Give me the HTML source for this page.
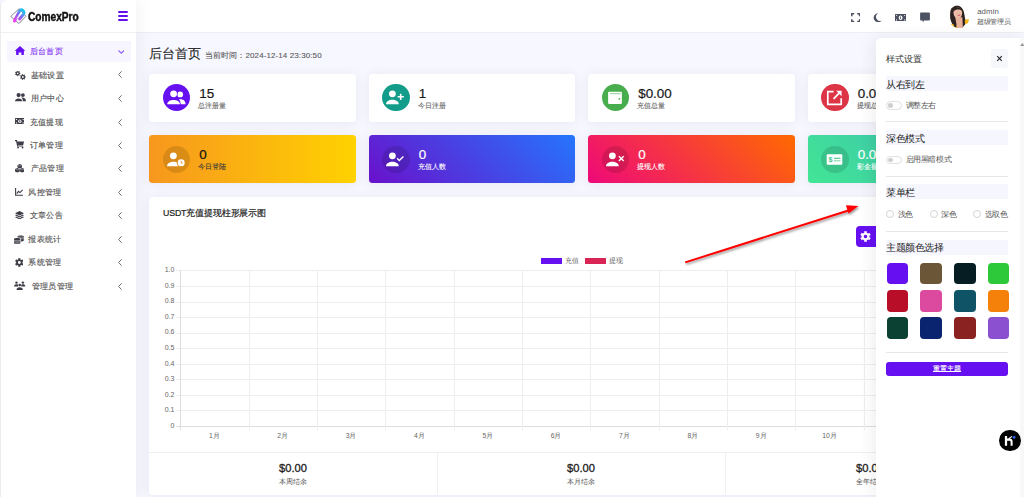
<!DOCTYPE html>
<html><head><meta charset="utf-8">
<style>
*{box-sizing:border-box;margin:0;padding:0}
html,body{width:1024px;height:497px;overflow:hidden}
body{position:relative;background:#f7f7ff;font-family:"Liberation Sans",sans-serif;color:#333}
.abs{position:absolute}
#side{position:absolute;left:0;top:0;width:136px;height:497px;background:#fff;border-left:1px solid #ececec;border-top-left-radius:6px;box-shadow:4px 0 14px rgba(30,30,60,.05);z-index:3}
#side .logo{position:absolute;left:0;top:0;width:135px;height:33px;border-bottom:1px solid #f0f0f2}
#head{position:absolute;left:136px;top:0;width:888px;height:33px;background:#fff;border-bottom:1px solid #efeff3;z-index:2}
.mt{font-size:8.25px;letter-spacing:.35px;-webkit-text-stroke:.15px currentColor;white-space:nowrap;line-height:12px}
.card{position:absolute;width:206.6px;height:48px;background:#fff;border-radius:3.5px;box-shadow:0 1px 12px rgba(40,40,100,.075)}
.card .circ{position:absolute;left:13.8px;top:10.8px;width:27.2px;height:27.2px;border-radius:50%}
.card .num{position:absolute;left:50px;top:12px;font-size:13.4px;color:#1a1a1a;-webkit-text-stroke:.2px currentColor}
.card .lbl{position:absolute;left:49.3px;top:27.2px;font-size:7px;color:#666;-webkit-text-stroke:.1px currentColor}
.card.g .num,.card.g .lbl{color:#fff}
.card.g .circ{background:rgba(0,0,0,.12)}
.card.dk .num{color:#111}.card.dk .lbl{color:#3a3a3a}
.ylab{font-size:7px;color:#666;text-align:right;white-space:nowrap}
.xlab{font-size:6.8px;color:#666;text-align:center}
#panel{position:absolute;left:876px;top:38px;width:148px;height:459px;background:#fff;border-top-left-radius:5px;box-shadow:-3px 0 16px rgba(0,0,0,.07);z-index:5}
.sec{position:absolute;left:10px;width:122px;height:15px;background:#f6f6ff;font-size:9.6px;letter-spacing:-.5px;color:#222}
.sec span{position:absolute;left:0;top:2.5px}
.sep{position:absolute;left:10px;width:122px;height:1px;background:#e6e6ea}
.tog{position:absolute;left:10px;width:15.5px;height:8.5px;border:1px solid #e0e0e0;border-radius:5px;background:#fff}
.tog:after{content:"";position:absolute;left:1.2px;top:1.2px;width:4.6px;height:4.6px;border-radius:50%;background:#cfcfcf}
.plbl{position:absolute;font-size:7.5px;letter-spacing:-.35px;color:#555;white-space:nowrap}
.radio{position:absolute;width:8px;height:8px;border:1px solid #d4d4d4;border-radius:50%;background:#fff}
.sw{position:absolute;width:21.5px;height:21.5px;border-radius:4px}
</style></head><body>

<div id="side">
  <div class="logo">
    <svg class="abs" style="left:7px;top:4px" width="20" height="22" viewBox="0 0 20 22">
      <defs><linearGradient id="lg1" x1="0" y1="1" x2=".75" y2="0"><stop offset="0" stop-color="#f43cf0"/><stop offset=".5" stop-color="#8e5cf0"/><stop offset="1" stop-color="#1ec4ee"/></linearGradient></defs>
      <path d="M3.2 12 L10.8 5 Q11.2 4.6 11.6 5 L17.6 11.8 Q18 12.2 17.6 12.6 L11.4 19.2 Q11 19.6 10.6 19.2 L3.2 12.8 Q2.8 12.4 3.2 12Z" fill="none" stroke="#747488" stroke-width=".9"/>
      <path d="M6.4 17 L11.6 7 Q13 4.6 14.8 6.4 L15.6 7.4 Q16.6 8.8 15.4 10.4 L11.6 15" fill="none" stroke="url(#lg1)" stroke-width="3" stroke-linecap="round"/><path d="M8.6 14.6 L12.9 8.4" stroke="#fff" stroke-width=".7"/>
    </svg>
    <div class="abs" style="left:26.6px;top:9.6px;font-size:12px;font-weight:bold;color:#111;-webkit-text-stroke:.45px #111;transform:scaleX(.845);transform-origin:left;white-space:nowrap">ComexPro</div>
    <div class="abs" style="left:116.5px;top:11.4px;width:10.6px;height:1.8px;border-radius:1px;background:#6610f2"></div>
    <div class="abs" style="left:116.5px;top:15.2px;width:10.6px;height:1.8px;border-radius:1px;background:#6610f2"></div>
    <div class="abs" style="left:116.5px;top:18.9px;width:10.6px;height:1.8px;border-radius:1px;background:#6610f2"></div>
  </div>
  <div class="abs" style="left:5.6px;top:40.8px;width:124.8px;height:20.8px;background:#f7f5ff"></div>
<svg class="abs" style="left:13.5px;top:46px" width="10" height="9" viewBox="0 0 10 9"><path d="M5 0 L0.1 4.6 L0.5 4.9 H1.1 V8.5 Q1.1 8.9 1.6 8.9 H3.6 V6.6 H6.4 V8.9 H8.4 Q8.9 8.9 8.9 8.5 V4.9 H9.5 L9.9 4.6Z" fill="#6610f2"/></svg>
<div class="abs mt" style="left:28.8px;top:45.8px;color:#8b3df5">后台首页</div>
<svg class="abs" style="left:116.6px;top:49.8px" width="6.6" height="4" viewBox="0 0 6.6 4"><path d="M0.5 0.5 L3.3 3.2 L6.1 0.5" fill="none" stroke="#9466f4" stroke-width="1.15"/></svg>
<svg class="abs" style="left:13.5px;top:70.5px" width="11" height="9" viewBox="0 0 11 9"><path fill-rule="evenodd" d="M4.68 1.85 L5.42 2.01 L5.42 2.79 L4.68 2.95 L4.36 3.60 L4.70 4.28 L4.09 4.77 L3.51 4.29 L2.79 4.45 L2.48 5.14 L1.71 4.97 L1.73 4.21 L1.16 3.75 L0.42 3.94 L0.08 3.23 L0.68 2.77 L0.68 2.03 L0.08 1.57 L0.42 0.86 L1.16 1.05 L1.73 0.59 L1.71 -0.17 L2.48 -0.34 L2.79 0.35 L3.51 0.51 L4.09 0.03 L4.70 0.52 L4.36 1.20Z M3.50 2.40 A0.8 0.8 0 1 0 1.90 2.40 A0.8 0.8 0 1 0 3.50 2.40Z" fill="#3d3d48"/><path fill-rule="evenodd" d="M10.02 5.41 L10.82 5.58 L10.82 6.42 L10.02 6.59 L9.68 7.29 L10.05 8.02 L9.39 8.55 L8.76 8.02 L8.00 8.20 L7.66 8.94 L6.84 8.75 L6.86 7.94 L6.24 7.45 L5.45 7.65 L5.09 6.89 L5.74 6.39 L5.74 5.61 L5.09 5.11 L5.45 4.35 L6.24 4.55 L6.86 4.06 L6.84 3.25 L7.66 3.06 L8.00 3.80 L8.76 3.98 L9.39 3.45 L10.05 3.98 L9.68 4.71Z M8.80 6.00 A0.9 0.9 0 1 0 7.00 6.00 A0.9 0.9 0 1 0 8.80 6.00Z" fill="#3d3d48"/></svg>
<div class="abs mt" style="left:29.8px;top:69.5px;color:#555">基础设置</div>
<svg class="abs" style="left:117px;top:71.4px" width="4" height="7" viewBox="0 0 4 7"><path d="M3.6 0.3 L0.6 3.5 L3.6 6.7" fill="none" stroke="#6a6a6a" stroke-width="0.95"/></svg>
<svg class="abs" style="left:13.5px;top:93.4px" width="11" height="8.2" viewBox="0 0 11 8.2"><circle cx="3.6" cy="2.1" r="2.1" fill="#3d3d48"/><circle cx="7.9" cy="2.1" r="1.9" fill="#3d3d48"/><path d="M0 8.2 C0 4.6 7.2 4.6 7.2 8.2Z" fill="#3d3d48"/><path d="M6.2 4.6 C9 4.2 11 5.6 11 8.2 H7.9 C7.9 6.6 7.3 5.4 6.2 4.6Z" fill="#3d3d48"/></svg>
<div class="abs mt" style="left:29.8px;top:93.1px;color:#555">用户中心</div>
<svg class="abs" style="left:117px;top:95.0px" width="4" height="7" viewBox="0 0 4 7"><path d="M3.6 0.3 L0.6 3.5 L3.6 6.7" fill="none" stroke="#6a6a6a" stroke-width="0.95"/></svg>
<svg class="abs" style="left:13.5px;top:118px" width="9.6" height="6.4" viewBox="0 0 9.6 6.4"><rect x="0" y="0" width="9.6" height="6.4" rx=".6" fill="#3d3d48"/><circle cx="4.8" cy="3.2" r="1.7" fill="#fff"/><path d="M0.9 0.9 H2.2 A1.3 1.3 0 0 1 0.9 2.2Z M8.7 0.9 H7.4 A1.3 1.3 0 0 0 8.7 2.2Z M0.9 5.5 H2.2 A1.3 1.3 0 0 0 0.9 4.2Z M8.7 5.5 H7.4 A1.3 1.3 0 0 1 8.7 4.2Z" fill="#fff"/><rect x="4.3" y="2.2" width="1" height="2" fill="#3d3d48"/></svg>
<div class="abs mt" style="left:28.8px;top:116.8px;color:#555">充值提现</div>
<svg class="abs" style="left:117px;top:118.7px" width="4" height="7" viewBox="0 0 4 7"><path d="M3.6 0.3 L0.6 3.5 L3.6 6.7" fill="none" stroke="#6a6a6a" stroke-width="0.95"/></svg>
<svg class="abs" style="left:13.6px;top:140.2px" width="9.1" height="8.5" viewBox="0 0 9.1 8.5"><path d="M0 0.6 H1.5 L2.6 6 H8.2" fill="none" stroke="#3d3d48" stroke-width="1.1"/><path d="M1.9 1.4 H9.1 L8.2 4.9 H2.6Z" fill="#3d3d48"/><circle cx="3" cy="7.6" r=".9" fill="#3d3d48"/><circle cx="7.6" cy="7.6" r=".9" fill="#3d3d48"/></svg>
<div class="abs mt" style="left:28.5px;top:140.2px;color:#555">订单管理</div>
<svg class="abs" style="left:117px;top:142.1px" width="4" height="7" viewBox="0 0 4 7"><path d="M3.6 0.3 L0.6 3.5 L3.6 6.7" fill="none" stroke="#6a6a6a" stroke-width="0.95"/></svg>
<svg class="abs" style="left:13.6px;top:164.4px" width="9.5" height="8.5" viewBox="0 0 9.5 8.5"><path d="M4.75 0 L7 1 V3.6 L4.75 4.6 L2.5 3.6 V1Z" fill="#3d3d48"/><path d="M2.4 3.9 L4.7 4.9 V7.5 L2.4 8.5 L0 7.5 V4.9Z" fill="#3d3d48"/><path d="M7.1 3.9 L9.5 4.9 V7.5 L7.1 8.5 L4.8 7.5 V4.9Z" fill="#3d3d48"/><path d="M2.5 1 L4.75 2 L7 1 M0 4.9 L2.4 5.9 L4.7 4.9 M4.8 4.9 L7.1 5.9 L9.5 4.9" stroke="#fff" stroke-width=".35" fill="none"/></svg>
<div class="abs mt" style="left:29.6px;top:163.4px;color:#555">产品管理</div>
<svg class="abs" style="left:117px;top:165.3px" width="4" height="7" viewBox="0 0 4 7"><path d="M3.6 0.3 L0.6 3.5 L3.6 6.7" fill="none" stroke="#6a6a6a" stroke-width="0.95"/></svg>
<svg class="abs" style="left:14px;top:188px" width="8" height="7.8" viewBox="0 0 8 7.8"><path d="M0.6 0 V7.2 H8" fill="none" stroke="#3d3d48" stroke-width="1.1"/><path d="M1.8 5.6 L3.5 3.4 L5 4.6 L7.6 1.8" fill="none" stroke="#3d3d48" stroke-width="1.1"/></svg>
<div class="abs mt" style="left:27.2px;top:187.0px;color:#555">风控管理</div>
<svg class="abs" style="left:117px;top:188.9px" width="4" height="7" viewBox="0 0 4 7"><path d="M3.6 0.3 L0.6 3.5 L3.6 6.7" fill="none" stroke="#6a6a6a" stroke-width="0.95"/></svg>
<svg class="abs" style="left:13.5px;top:211.3px" width="9.1" height="8.2" viewBox="0 0 9.1 8.2"><path d="M4.55 0 L9.1 2.2 L4.55 4.4 L0 2.2Z" fill="#3d3d48"/><path d="M1.2 3.6 L4.55 5.2 L7.9 3.6 L9.1 4.2 L4.55 6.4 L0 4.2Z" fill="#3d3d48"/><path d="M1.2 5.6 L4.55 7.2 L7.9 5.6 L9.1 6.2 L4.55 8.4 L0 6.2Z" fill="#3d3d48"/></svg>
<div class="abs mt" style="left:28.5px;top:210.2px;color:#555">文章公告</div>
<svg class="abs" style="left:117px;top:212.1px" width="4" height="7" viewBox="0 0 4 7"><path d="M3.6 0.3 L0.6 3.5 L3.6 6.7" fill="none" stroke="#6a6a6a" stroke-width="0.95"/></svg>
<svg class="abs" style="left:13.2px;top:234.5px" width="9.8" height="9" viewBox="0 0 9.8 9"><path d="M3.6 1.3 C3.6 0.2 9.8 0.2 9.8 1.3 V5.6 C9.8 6.4 8 6.6 7 6.6 V3.5 C7 3 5 2.6 3.6 2.8Z" fill="#3d3d48"/><path d="M0 4 C0 2.8 6.4 2.8 6.4 4 V7.9 C6.4 9.2 0 9.2 0 7.9Z" fill="#3d3d48"/><path d="M0 5.2 C1 6 5.4 6 6.4 5.2 M0 6.6 C1 7.4 5.4 7.4 6.4 6.6 M3.6 2.4 C5 1.9 8.8 2 9.8 2.6 M7 3.9 C8 3.9 9.3 3.8 9.8 3.6" stroke="#fff" stroke-width=".45" fill="none"/></svg>
<div class="abs mt" style="left:27.2px;top:234.2px;color:#555">报表统计</div>
<svg class="abs" style="left:117px;top:236.1px" width="4" height="7" viewBox="0 0 4 7"><path d="M3.6 0.3 L0.6 3.5 L3.6 6.7" fill="none" stroke="#6a6a6a" stroke-width="0.95"/></svg>
<svg class="abs" style="left:13.5px;top:257.5px" width="8.6" height="9" viewBox="0 0 9 9"><path fill-rule="evenodd" d="M5.55 7.73 L5.72 9.04 L3.28 9.04 L3.45 7.73 L2.22 7.03 L1.18 7.82 L-0.04 5.72 L1.17 5.21 L1.17 3.79 L-0.04 3.28 L1.18 1.18 L2.22 1.97 L3.45 1.27 L3.28 -0.04 L5.72 -0.04 L5.55 1.27 L6.78 1.97 L7.82 1.18 L9.04 3.28 L7.83 3.79 L7.83 5.21 L9.04 5.72 L7.82 7.82 L6.78 7.03Z M6.00 4.50 A1.5 1.5 0 1 0 3.00 4.50 A1.5 1.5 0 1 0 6.00 4.50Z" fill="#3d3d48"/></svg>
<div class="abs mt" style="left:27.2px;top:257.4px;color:#555">系统管理</div>
<svg class="abs" style="left:117px;top:259.3px" width="4" height="7" viewBox="0 0 4 7"><path d="M3.6 0.3 L0.6 3.5 L3.6 6.7" fill="none" stroke="#6a6a6a" stroke-width="0.95"/></svg>
<svg class="abs" style="left:13.4px;top:281.3px" width="11.4" height="9" viewBox="0 0 11.4 9"><circle cx="2.5" cy="1.6" r="1.2" fill="#3d3d48"/><circle cx="8.9" cy="1.6" r="1.2" fill="#3d3d48"/><path d="M0 5.5 C0.2 3.9 1.2 3.3 2.5 3.3 C3.5 3.3 4.2 3.7 4.5 4.3 L4.2 5.5Z" fill="#3d3d48"/><path d="M11.4 5.5 C11.2 3.9 10.2 3.3 8.9 3.3 C7.9 3.3 7.2 3.7 6.9 4.3 L7.2 5.5Z" fill="#3d3d48"/><circle cx="5.7" cy="4" r="1.75" fill="#fff"/><circle cx="5.7" cy="4" r="1.3" fill="#3d3d48"/><path d="M2.5 9 C2.5 7 3.8 6.2 5.7 6.2 C7.6 6.2 8.9 7 8.9 9Z" fill="#3d3d48"/></svg>
<div class="abs mt" style="left:30.6px;top:280.6px;color:#555">管理员管理</div>
<svg class="abs" style="left:117px;top:282.5px" width="4" height="7" viewBox="0 0 4 7"><path d="M3.6 0.3 L0.6 3.5 L3.6 6.7" fill="none" stroke="#6a6a6a" stroke-width="0.95"/></svg>
</div>

<div id="head">
  <!-- fullscreen -->
  <svg class="abs" style="left:714.8px;top:13px" width="9.4" height="9.4" viewBox="0 0 9.4 9.4"><path d="M0.8 3.2 V0.8 H3.2 M6.2 0.8 H8.6 V3.2 M8.6 6.2 V8.6 H6.2 M3.2 8.6 H0.8 V6.2" fill="none" stroke="#4d5262" stroke-width="1.5"/></svg>
  <!-- moon -->
  <svg class="abs" style="left:737.4px;top:13px" width="9" height="9.2" viewBox="0 0 9 9.2"><path d="M5.2 0.2 A4.5 4.5 0 1 0 8.8 7.4 A3.3 3.4 0 1 1 5.2 0.2Z" fill="#4d5262"/></svg>
  <!-- money -->
  <svg class="abs" style="left:759px;top:14px" width="11.2" height="7.4" viewBox="0 0 11.2 7.4"><rect x="0" y="0" width="11.2" height="7.4" rx=".6" fill="#4d5262"/><ellipse cx="5.6" cy="3.7" rx="1.9" ry="2.3" fill="#fff"/><rect x="5.2" y="2.4" width=".8" height="2.6" fill="#4d5262"/><circle cx="1.5" cy="1.5" r=".55" fill="#fff"/><circle cx="9.7" cy="1.5" r=".55" fill="#fff"/><circle cx="1.5" cy="5.9" r=".55" fill="#fff"/><circle cx="9.7" cy="5.9" r=".55" fill="#fff"/></svg>
  <!-- chat -->
  <svg class="abs" style="left:784px;top:12px" width="10" height="11" viewBox="0 0 10 11"><path d="M1 0.4 H9 A.9 .9 0 0 1 9.9 1.3 V7.6 A.9 .9 0 0 1 9 8.5 H4 L3 10.2 L2.4 8.5 H1 A.9 .9 0 0 1 .1 7.6 V1.3 A.9 .9 0 0 1 1 .4Z" fill="#4d5262"/></svg>
  <!-- avatar -->
  <div class="abs" style="left:812px;top:5px;width:23px;height:23px;border-radius:50%;overflow:hidden;background:#fff">
    <svg width="23" height="23" viewBox="0 0 23 23">
      <path d="M7.5 0.5 C10.5 0.2 13.5 1.2 15.2 5 C16.6 8 16.5 12 17.8 16.3 C18 18 17.5 19 17 19.5 L14.6 22.5 H6.8 C5 20.5 3.6 18.5 2.6 15 C1.8 11 2 5.5 3.5 3 C4.5 1.5 6 0.6 7.5 0.5Z" fill="#2e2220"/>
      <path d="M1.5 19.5 C3.5 18.6 6 18.8 8 20 L10.5 23 H1.5Z" fill="#f0b51e"/>
      <path d="M16.8 15 C18.5 14.2 20 14.2 21 14.8 L20 18 L17 19.5Z" fill="#f0b51e"/>
      <path d="M7 12 C8 12.5 13 12.5 14.4 12 C14.6 15 14.8 19 14.8 23 H8.6 C8.6 19 8 15 7 12Z" fill="#e8b29a"/>
      <ellipse cx="9.8" cy="7.8" rx="4.4" ry="5.4" fill="#ecbca6" transform="rotate(-8 9.8 7.8)"/>
      <path d="M5.2 7 C5.6 3 8 2.2 10 2.4 C12.5 2.6 14 4 14.6 6.5 C12.8 4.6 10 4.2 7.6 5 C6.5 5.4 5.8 6 5.2 7Z" fill="#2e2220"/>
      <path d="M5.2 8 C5 11 6 14 7.6 17 L8.4 22 L6.8 22.5 C5 19 4.6 15 4.8 10Z" fill="#2e2220"/>
      <path d="M14.4 6.5 C15.2 10 14.6 14 15 18.5 L16.2 18 C15.6 14 15.8 10 14.4 6.5Z" fill="#2e2220"/>
      <path d="M9.6 10.1 Q11 11 12.3 9.7" stroke="#c9505c" stroke-width="1" fill="none"/>
    </svg>
  </div>
  <div class="abs" style="left:841.2px;top:6.6px;font-size:7.8px;letter-spacing:.1px;color:#5a5a5a">admin</div>
  <div class="abs" style="left:841px;top:16.9px;font-size:7px;letter-spacing:-.3px;color:#555">超级管理员</div>
</div>

<!-- title -->
<div class="abs" style="left:148.5px;top:44.5px;font-size:13.3px;color:#222;white-space:nowrap;-webkit-text-stroke:.1px #222">后台首页<span style="font-size:8px;color:#5a5a5a;margin-left:4.5px;letter-spacing:.1px;-webkit-text-stroke:.1px #5a5a5a">当前时间：2024-12-14 23:30:50</span></div>

<div class="card" style="left:149.2px;top:73.5px"><div class="circ" style="background:#6610f2"><svg width="27.2" height="27.2" viewBox="0 0 27.2 27.2" style="position:absolute;left:0;top:0"><circle cx="17.2" cy="10.4" r="2.9" fill="#fff"/><path d="M16 15.3 C20.5 14.6 22.6 17 22.6 20.3 H17.6 C17.6 18 17 16.4 16 15.3Z" fill="#fff"/><circle cx="10.6" cy="9.8" r="3.9" fill="#6610f2"/><circle cx="10.6" cy="9.8" r="3.4" fill="#fff"/><path d="M3.6 20.8 C3.6 13.8 17.6 13.8 17.6 20.8Z" fill="#6610f2"/><path d="M4.2 20.3 C4.2 14.5 17 14.5 17 20.3Z" fill="#fff"/></svg></div><div class="num">15</div><div class="lbl">总注册量</div></div>
<div class="card" style="left:368.7px;top:73.5px"><div class="circ" style="background:#139c8a"><svg width="27.2" height="27.2" viewBox="0 0 27.2 27.2" style="position:absolute;left:0;top:0"><circle cx="10.4" cy="9.8" r="3.4" fill="#fff"/><path d="M4 20.3 C4 14.2 16.8 14.2 16.8 20.3Z" fill="#fff"/><path d="M15.6 12.8 H21.8 M18.7 9.7 V15.9" stroke="#fff" stroke-width="1.6"/></svg></div><div class="num">1</div><div class="lbl">今日注册</div></div>
<div class="card" style="left:588.2px;top:73.5px"><div class="circ" style="background:#47ad4d"><svg width="27.2" height="27.2" viewBox="0 0 27.2 27.2" style="position:absolute;left:0;top:0"><rect x="6.1" y="7.7" width="13.8" height="12.3" rx="1.2" fill="#fff"/><rect x="8" y="9.1" width="10.8" height="1.1" fill="#9ad39d"/><circle cx="17.4" cy="14.9" r=".85" fill="#47ad4d"/></svg></div><div class="num">$0.00</div><div class="lbl">充值总量</div></div>
<div class="card" style="left:807.7px;top:73.5px"><div class="circ" style="background:#dc3545"><svg width="27.2" height="27.2" viewBox="0 0 27.2 27.2" style="position:absolute;left:0;top:0"><path d="M12.6 7.7 H6.8 V20.3 H20.2 V14.2" fill="none" stroke="#fff" stroke-width="1.7"/><path d="M12.6 14.9 L18.6 8.6" stroke="#fff" stroke-width="1.7"/><path d="M15.2 6.8 H20.6 V12.2Z" fill="#fff"/></svg></div><div class="num">0.00</div><div class="lbl">提现总量</div></div>
<div class="card g dk" style="left:149.2px;top:135.1px;background:linear-gradient(to right,#f7971e,#ffd200)"><div class="circ"><svg width="27.2" height="27.2" viewBox="0 0 27.2 27.2" style="position:absolute;left:0;top:0"><circle cx="10.4" cy="9.8" r="3.4" fill="#fff"/><path d="M4 20.3 C4 14.2 16.8 14.2 16.8 20.3Z" fill="#fff"/><circle cx="18.2" cy="16.8" r="4.4" fill="#da8d19"/><circle cx="18.2" cy="16.8" r="3.5" fill="#fff"/><path d="M18.2 14.8 V17 H19.9" stroke="#da8d19" stroke-width=".8" fill="none"/></svg></div><div class="num">0</div><div class="lbl">今日登陆</div></div>
<div class="card g" style="left:368.7px;top:135.1px;background:linear-gradient(45deg,#6a11cb,#2575fc)"><div class="circ"><svg width="27.2" height="27.2" viewBox="0 0 27.2 27.2" style="position:absolute;left:0;top:0"><circle cx="10.4" cy="9.8" r="3.4" fill="#fff"/><path d="M4 20.3 C4 14.2 16.8 14.2 16.8 20.3Z" fill="#fff"/><path d="M15.1 12.2 L17.3 14.5 L21.4 10.4" stroke="#fff" stroke-width="1.4" fill="none"/></svg></div><div class="num">0</div><div class="lbl">充值人数</div></div>
<div class="card g" style="left:588.2px;top:135.1px;background:linear-gradient(45deg,#ee0979,#ff6a00)"><div class="circ"><svg width="27.2" height="27.2" viewBox="0 0 27.2 27.2" style="position:absolute;left:0;top:0"><circle cx="10.4" cy="9.8" r="3.4" fill="#fff"/><path d="M4 20.3 C4 14.2 16.8 14.2 16.8 20.3Z" fill="#fff"/><path d="M16.9 10.3 L21.7 15.1 M21.7 10.3 L16.9 15.1" stroke="#fff" stroke-width="1.4"/></svg></div><div class="num">0</div><div class="lbl">提现人数</div></div>
<div class="card g" style="left:807.7px;top:135.1px;background:linear-gradient(45deg,#42e695,#3bb2b8)"><div class="circ"><svg width="27.2" height="27.2" viewBox="0 0 27.2 27.2" style="position:absolute;left:0;top:0"><rect x="5.7" y="8.3" width="15.6" height="10.5" rx="1" fill="#fff"/><text x="9.4" y="15.9" text-anchor="middle" font-size="7.2" font-weight="bold" fill="#3fc68e" font-family="Liberation Sans">$</text><path d="M13 12.3 H19.5" stroke="#3fc68e" stroke-width="1.1"/><path d="M13 14.8 H19.5" stroke="#8fdcb8" stroke-width="1.3"/></svg></div><div class="num">0.00</div><div class="lbl">彩金额度</div></div>

<!-- chart card -->
<div class="abs" style="left:149.2px;top:197px;width:865px;height:297.5px;background:#fff;border-radius:3.5px;box-shadow:0 1px 12px rgba(40,40,100,.075)"></div>
<div class="abs" style="left:163px;top:208px;font-size:8.8px;letter-spacing:-.15px;color:#222;-webkit-text-stroke:.2px #222;white-space:nowrap">USDT充值提现柱形展示图</div>
<!-- legend -->
<div class="abs" style="left:540.8px;top:257.8px;width:21.2px;height:6.4px;background:#6610f2"></div>
<div class="abs" style="left:565.2px;top:257.2px;font-size:6.5px;color:#666">充值</div>
<div class="abs" style="left:584.6px;top:257.8px;width:21.2px;height:6.4px;background:#d92456"></div>
<div class="abs" style="left:608.8px;top:257.2px;font-size:6.5px;color:#666">提现</div>
<div class="abs" style="left:176px;top:426px;width:824px;height:1px;background:#dedede"></div>
<div class="abs ylab" style="top:421.70px;right:849.6px">0</div>
<div class="abs" style="left:176px;top:410px;width:824px;height:1px;background:#eeeeee"></div>
<div class="abs ylab" style="top:406.15px;right:849.6px">0.1</div>
<div class="abs" style="left:176px;top:395px;width:824px;height:1px;background:#eeeeee"></div>
<div class="abs ylab" style="top:390.60px;right:849.6px">0.2</div>
<div class="abs" style="left:176px;top:379px;width:824px;height:1px;background:#eeeeee"></div>
<div class="abs ylab" style="top:375.05px;right:849.6px">0.3</div>
<div class="abs" style="left:176px;top:364px;width:824px;height:1px;background:#eeeeee"></div>
<div class="abs ylab" style="top:359.50px;right:849.6px">0.4</div>
<div class="abs" style="left:176px;top:348px;width:824px;height:1px;background:#eeeeee"></div>
<div class="abs ylab" style="top:343.95px;right:849.6px">0.5</div>
<div class="abs" style="left:176px;top:333px;width:824px;height:1px;background:#eeeeee"></div>
<div class="abs ylab" style="top:328.40px;right:849.6px">0.6</div>
<div class="abs" style="left:176px;top:317px;width:824px;height:1px;background:#eeeeee"></div>
<div class="abs ylab" style="top:312.85px;right:849.6px">0.7</div>
<div class="abs" style="left:176px;top:302px;width:824px;height:1px;background:#eeeeee"></div>
<div class="abs ylab" style="top:297.30px;right:849.6px">0.8</div>
<div class="abs" style="left:176px;top:286px;width:824px;height:1px;background:#eeeeee"></div>
<div class="abs ylab" style="top:281.75px;right:849.6px">0.9</div>
<div class="abs" style="left:176px;top:270px;width:824px;height:1px;background:#eeeeee"></div>
<div class="abs ylab" style="top:266.20px;right:849.6px">1.0</div>
<div class="abs" style="left:180px;top:270px;width:1px;height:160px;background:#dedede"></div>
<div class="abs" style="left:249px;top:270px;width:1px;height:160px;background:#eeeeee"></div>
<div class="abs" style="left:317px;top:270px;width:1px;height:160px;background:#eeeeee"></div>
<div class="abs" style="left:385px;top:270px;width:1px;height:160px;background:#eeeeee"></div>
<div class="abs" style="left:454px;top:270px;width:1px;height:160px;background:#eeeeee"></div>
<div class="abs" style="left:522px;top:270px;width:1px;height:160px;background:#eeeeee"></div>
<div class="abs" style="left:590px;top:270px;width:1px;height:160px;background:#eeeeee"></div>
<div class="abs" style="left:659px;top:270px;width:1px;height:160px;background:#eeeeee"></div>
<div class="abs" style="left:727px;top:270px;width:1px;height:160px;background:#eeeeee"></div>
<div class="abs" style="left:795px;top:270px;width:1px;height:160px;background:#eeeeee"></div>
<div class="abs" style="left:864px;top:270px;width:1px;height:160px;background:#eeeeee"></div>
<div class="abs" style="left:932px;top:270px;width:1px;height:160px;background:#eeeeee"></div>
<div class="abs" style="left:1000px;top:270px;width:1px;height:160px;background:#eeeeee"></div>
<div class="abs xlab" style="left:199.38px;top:431.2px;width:30px">1月</div>
<div class="abs xlab" style="left:267.72px;top:431.2px;width:30px">2月</div>
<div class="abs xlab" style="left:336.07px;top:431.2px;width:30px">3月</div>
<div class="abs xlab" style="left:404.43px;top:431.2px;width:30px">4月</div>
<div class="abs xlab" style="left:472.77px;top:431.2px;width:30px">5月</div>
<div class="abs xlab" style="left:541.12px;top:431.2px;width:30px">6月</div>
<div class="abs xlab" style="left:609.47px;top:431.2px;width:30px">7月</div>
<div class="abs xlab" style="left:677.82px;top:431.2px;width:30px">8月</div>
<div class="abs xlab" style="left:746.17px;top:431.2px;width:30px">9月</div>
<div class="abs xlab" style="left:814.52px;top:431.2px;width:30px">10月</div>
<div class="abs xlab" style="left:882.88px;top:431.2px;width:30px">11月</div>
<div class="abs xlab" style="left:951.22px;top:431.2px;width:30px">12月</div>
<!-- summary -->
<div class="abs" style="left:149.2px;top:452px;width:865px;height:1px;background:#efeff2"></div>
<div class="abs" style="left:437px;top:452px;width:1px;height:42px;background:#efeff2"></div>
<div class="abs" style="left:725px;top:452px;width:1px;height:42px;background:#efeff2"></div>
<div class="abs" style="left:149px;top:462px;width:288px;text-align:center;font-size:11.2px;color:#222;-webkit-text-stroke:.3px #222">$0.00</div>
<div class="abs" style="left:149px;top:477.6px;width:288px;text-align:center;font-size:6.5px;color:#555">本周结余</div>
<div class="abs" style="left:437px;top:462px;width:288px;text-align:center;font-size:11.2px;color:#222;-webkit-text-stroke:.3px #222">$0.00</div>
<div class="abs" style="left:437px;top:477.6px;width:288px;text-align:center;font-size:6.5px;color:#555">本月结余</div>
<div class="abs" style="left:726px;top:462px;width:288px;text-align:center;font-size:11.2px;color:#222;-webkit-text-stroke:.3px #222">$0.00</div>
<div class="abs" style="left:726px;top:477.6px;width:288px;text-align:center;font-size:6.5px;color:#555">全年结余</div>

<!-- arrow -->
<svg class="abs" style="left:0;top:0;z-index:4" width="1024" height="497" viewBox="0 0 1024 497">
  <defs><filter id="sh" x="-20%" y="-20%" width="140%" height="140%"><feDropShadow dx="1" dy="1.5" stdDeviation="1" flood-color="#000" flood-opacity=".45"/></filter></defs>
  <g filter="url(#sh)">
    <path d="M685.2 262.4 L850 210" stroke="#ff0000" stroke-width="2" fill="none"/>
    <path d="M846 205.3 L858.5 205.9 L848.4 213.4Z" fill="#ff0000"/>
  </g>
</svg>

<!-- gear button -->
<div class="abs" style="left:856.3px;top:225.6px;width:21px;height:21.4px;background:#6610f2;border-radius:4px 0 0 4px;z-index:4">
  <svg class="abs" style="left:4.2px;top:5.4px" width="11" height="11" viewBox="0 0 11 11"><path fill-rule="evenodd" d="M6.74 9.30 L6.90 10.72 L4.10 10.72 L4.26 9.30 L2.82 8.47 L1.68 9.32 L0.28 6.90 L1.59 6.33 L1.59 4.67 L0.28 4.10 L1.68 1.68 L2.82 2.53 L4.26 1.70 L4.10 0.28 L6.90 0.28 L6.74 1.70 L8.18 2.53 L9.32 1.68 L10.72 4.10 L9.41 4.67 L9.41 6.33 L10.72 6.90 L9.32 9.32 L8.18 8.47Z M7.30 5.50 A1.8 1.8 0 1 0 3.70 5.50 A1.8 1.8 0 1 0 7.30 5.50Z" fill="#fff"/></svg>
</div>

<!-- settings panel -->
<div id="panel">
  <div class="abs" style="left:10px;top:15px;font-size:9px;color:#333">样式设置</div>
  <div class="abs" style="left:115px;top:11px;width:17px;height:18.5px;background:#f6f7fb;border-radius:3px"><svg class="abs" style="left:5px;top:6px" width="7" height="7" viewBox="0 0 7 7"><path d="M1.2 1.2 L5.8 5.8 M5.8 1.2 L1.2 5.8" stroke="#222" stroke-width="1.05"/></svg></div>

  <div class="sec" style="top:38px"><span>从右到左</span></div>
  <div class="tog" style="top:63px"></div><div class="plbl" style="left:29.5px;top:63px">调整左右</div>
  <div class="sep" style="top:83px"></div>

  <div class="sec" style="top:92px"><span>深色模式</span></div>
  <div class="tog" style="top:117.5px"></div><div class="plbl" style="left:29.5px;top:117px">启用黑暗模式</div>
  <div class="sep" style="top:137.5px"></div>

  <div class="sec" style="top:146px"><span>菜单栏</span></div>
  <div class="radio" style="left:10px;top:172px"></div><div class="plbl" style="left:21.7px;top:171.5px">浅色</div>
  <div class="radio" style="left:53.6px;top:172px"></div><div class="plbl" style="left:65px;top:171.5px">深色</div>
  <div class="radio" style="left:97.3px;top:172px"></div><div class="plbl" style="left:108.7px;top:171.5px">选取色</div>
  <div class="sep" style="top:192.6px"></div>

  <div class="sec" style="top:201.7px"><span>主题颜色选择</span></div>
  <div class="sw" style="left:10.6px;top:224.8px;background:#6610f2"></div>
  <div class="sw" style="left:44px;top:224.8px;background:#6b5637"></div>
  <div class="sw" style="left:78px;top:224.8px;background:#051d23"></div>
  <div class="sw" style="left:111.8px;top:224.8px;background:#2ec93a"></div>
  <div class="sw" style="left:10.6px;top:252px;background:#b80e28"></div>
  <div class="sw" style="left:44px;top:252px;background:#dc4a9f"></div>
  <div class="sw" style="left:78px;top:252px;background:#0f5466"></div>
  <div class="sw" style="left:111.8px;top:252px;background:#f5800a"></div>
  <div class="sw" style="left:10.6px;top:279px;background:#0b4133"></div>
  <div class="sw" style="left:44px;top:279px;background:#0a2470"></div>
  <div class="sw" style="left:78px;top:279px;background:#8a2222"></div>
  <div class="sw" style="left:111.8px;top:279px;background:#8b50cf"></div>
  <div class="sep" style="top:314.4px"></div>
  <div class="abs" style="left:10px;top:324px;width:122px;height:13.6px;background:#6610f2;border-radius:3px;color:#fff;font-size:7px;text-align:center;line-height:13.6px"><span style="text-decoration:underline;text-decoration-thickness:.6px;text-underline-offset:.2px;-webkit-text-stroke:.15px #fff">重置主题</span></div>
  <!-- scrollbar -->
  <div class="abs" style="left:143.5px;top:0;width:4.5px;height:459px;background:#f8f8f8"></div>
  <svg class="abs" style="left:144px;top:5px" width="4.5" height="3" viewBox="0 0 4.5 3"><path d="M0 3 L2.5 0 L4.5 3Z" fill="#999"/></svg>
  <!-- K bubble -->
  <div class="abs" style="left:123.4px;top:392.2px;width:21.3px;height:21.3px;border-radius:50%;background:#000"><svg class="abs" style="left:0;top:0" width="21.3" height="21.3" viewBox="0 0 21.3 21.3"><path d="M5.9 6.1 H8.1 V8.6 H10.6 Q13.6 8.6 13.6 11.6 V15.7 H11.6 V11.8 Q11.6 10.7 10.5 10.7 H8.1 V15.7 H5.9Z" fill="#fff"/><path d="M9.4 9.2 L12.9 6.4" stroke="#fff" stroke-width="1.1"/><circle cx="15.1" cy="7.3" r="1.35" fill="#2f66ff"/></svg></div>
</div>

</body></html>
